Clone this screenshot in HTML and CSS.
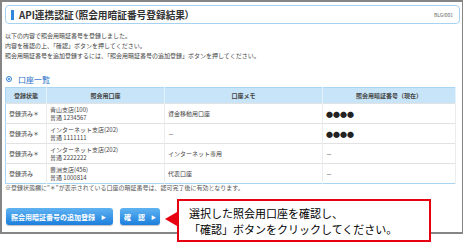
FILE: index.html
```html
<!DOCTYPE html>
<html lang="ja">
<head>
    <meta charset="UTF-8">
    <meta name="viewport" content="width=device-width, initial-scale=1.0">
    <title>API連携認証（照会用暗証番号登録結果）</title>
    <link rel="stylesheet" href="styles.css">
</head>
<body>
    <div class="frame">
        <div class="title-bar">
            <span class="accent"></span>
            <h1>API連携認証（照会用暗証番号登録結果）</h1>
            <span class="screen-id">BLGI001</span>
        </div>

        <div class="intro">
            <p>以下の内容で照会用暗証番号を登録しました。</p>
            <p>内容を確認の上、「確認」ボタンを押してください。</p>
            <p>照会用暗証番号を追加登録するには、「照会用暗証番号の追加登録」ボタンを押してください。</p>
        </div>

        <h2 class="section-head"><span class="radio"></span>口座一覧</h2>

        <table class="accounts">
            <thead>
                <tr>
                    <th class="col-status">登録状態</th>
                    <th class="col-account">照会用口座</th>
                    <th class="col-memo">口座メモ</th>
                    <th class="col-pin">照会用暗証番号（現在）</th>
                </tr>
            </thead>
            <tbody>
                <tr>
                    <td>登録済み＊</td>
                    <td>青山支店(100)<br>普通 1234567</td>
                    <td>資金移動用口座</td>
                    <td class="pin">●●●●</td>
                </tr>
                <tr>
                    <td>登録済み＊</td>
                    <td>インターネット支店(202)<br>普通 1111111</td>
                    <td>－</td>
                    <td class="pin">●●●●</td>
                </tr>
                <tr>
                    <td>登録済み＊</td>
                    <td>インターネット支店(202)<br>普通 2222222</td>
                    <td>インターネット専用</td>
                    <td>－</td>
                </tr>
                <tr>
                    <td>登録済み</td>
                    <td>豊洲支店(456)<br>普通 1000814</td>
                    <td>代表口座</td>
                    <td>－</td>
                </tr>
            </tbody>
        </table>

        <p class="note">※登録状態欄に"＊"が表示されている口座の暗証番号は、認可完了後に有効となります。</p>

        <div class="actions">
            <button class="btn btn-add">照会用暗証番号の追加登録<span class="arrow">▶</span></button>
            <button class="btn btn-confirm">確　認<span class="arrow">▶</span></button>
        </div>
    </div>

    <div class="callout">
        <p>選択した照会用口座を確認し、</p>
        <p>「確認」ボタンをクリックしてください。</p>
    </div>
</body>
</html>
```

FILE: styles.css
```css
/* 全体 */
body {
    margin: 0;
    background: #fff;
    font-family: "Noto Sans CJK JP", "Liberation Sans", sans-serif;
    color: #333;
    position: relative;
    width: 463px;
    height: 245px;
    overflow: hidden;
}

p {
    margin: 0;
}

.frame {
    border: 2px solid #858585;
    padding: 3px 2px 0 3px;
    width: 455px;
    height: 227px;
}

/* タイトル */
.title-bar {
    display: flex;
    align-items: center;
    height: 17px;
    border: 1px solid #a8d2f2;
    border-radius: 4px;
    padding: 0 6px 0 5px;
}

.accent {
    width: 3px;
    height: 10px;
    background: #2f86dc;
    margin-right: 5px;
}

h1 {
    margin: 0;
    font-size: 9.7px;
    font-weight: bold;
    color: #333;
    line-height: 16px;
    font-feature-settings: "palt";
}

.screen-id {
    margin-left: auto;
    font-size: 5px;
    color: #666;
}

/* 説明文 */
.intro {
    margin-top: 7px;
    font-size: 6px;
    line-height: 10px;
    color: #444;
}

.section-head {
    display: flex;
    align-items: center;
    margin: 13px 0 0 1px;
    height: 10px;
    font-size: 8px;
    font-weight: normal;
    color: #1f6fc8;
}

.radio {
    width: 4px;
    height: 4px;
    border: 1px solid #2a7fd6;
    border-radius: 50%;
    margin-right: 6px;
    position: relative;
}

.radio::after {
    content: "";
    position: absolute;
    left: 1px;
    top: 1px;
    width: 2px;
    height: 2px;
    border-radius: 50%;
    background: #2a7fd6;
}

/* 口座テーブル */
.accounts {
    margin-top: 3px;
    width: 451px;
    border-collapse: collapse;
    border: 1px solid #a9d5f3;
    font-size: 6px;
    table-layout: fixed;
}

.accounts th {
    background: #c8e4f8;
    height: 15px;
    padding: 0;
    font-weight: bold;
    color: #444;
    border-right: 1px solid #e6f2fb;
}

.accounts td {
    height: 19px;
    padding: 0 3px;
    line-height: 8px;
    border-top: 1px solid #e2e2e2;
    border-right: 1px solid #ececec;
    color: #444;
    white-space: nowrap;
}

.col-status { width: 40px; }
.col-account { width: 117px; }
.col-memo { width: 157px; }

.accounts td.pin {
    font-size: 7px;
    color: #222;
}

.note {
    font-size: 6px;
    line-height: 8px;
    color: #555;
}

/* ボタン */
.actions {
    display: flex;
    gap: 7px;
    margin: 16px 0 0 1px;
}

.btn {
    height: 17px;
    border: none;
    border-radius: 3px;
    background: linear-gradient(#5fb3f2, #1c7fdc);
    box-shadow: 0 1px 1px rgba(0, 0, 0, 0.25);
    color: #fff;
    font-family: inherit;
    font-size: 7px;
    font-weight: bold;
    padding: 0 5px;
    display: flex;
    align-items: center;
    white-space: nowrap;
}

.btn-add { width: 107px; }
.btn-confirm { width: 40px; justify-content: center; }

.arrow {
    font-size: 5px;
    margin-left: 6px;
}

/* 吹き出し */
.callout {
    position: absolute;
    left: 177px;
    top: 199px;
    width: 254px;
    height: 43px;
    border: 2px solid #e60012;
    background: #fff;
    box-sizing: border-box;
    padding: 4px 0 0 10px;
    font-size: 11px;
    line-height: 16px;
    color: #000;
}

.callout::before {
    content: "";
    position: absolute;
    left: -14px;
    top: 11px;
    border-style: solid;
    border-width: 7px 12px 7px 0;
    border-color: transparent #e60012 transparent transparent;
}
```
